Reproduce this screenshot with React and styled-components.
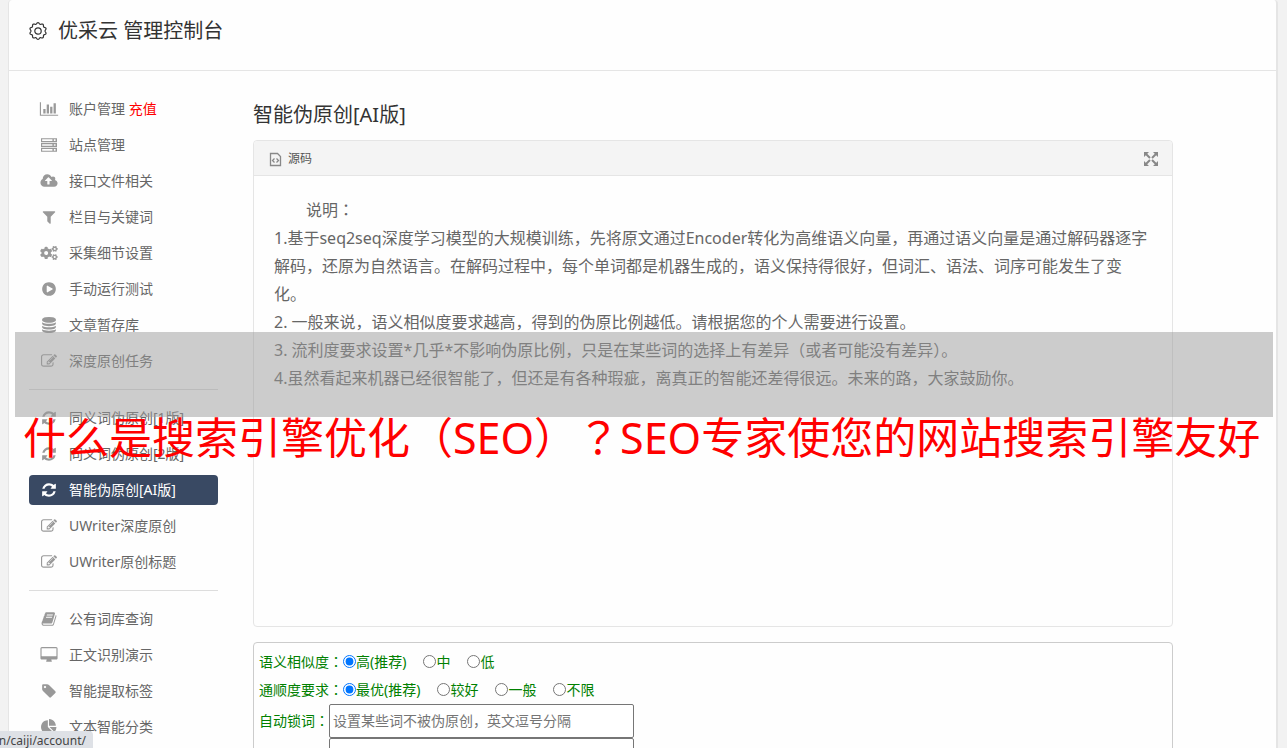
import React, { useState } from 'react';
import styled, { createGlobalStyle } from 'styled-components';
import { FaCogs } from 'react-icons/fa';

const GlobalStyle = createGlobalStyle`
  * {
    box-sizing: border-box;
  }

  body {
    margin: 0;
    overflow: hidden;
    background: #f2f2f2;
    color: #666;
    font-family: 'Noto Sans', 'Noto Sans CJK SC', sans-serif;
    font-size: 14px;
  }
`;

const Page = styled.div`
  position: relative;
  height: 100vh;
  overflow: hidden;
`;

const Shell = styled.div`
  margin: 0 9px 0 8px;
  min-height: 100%;
  background: #fefefe;
  border-left: 1px solid #e5e5e5;
  border-right: 2px solid #e5e5e5;
  border-radius: 4px 4px 0 0;
`;

const Header = styled.header`
  display: flex;
  align-items: center;
  gap: 11px;
  height: 71px;
  padding: 0 20px 8px;
  border-bottom: 1px solid #e5e5e5;
  color: #333;
`;

const Brand = styled.h1`
  margin: 0;
  font-size: 20px;
  line-height: 28px;
  font-weight: 400;
`;

const Columns = styled.div`
  display: flex;
  align-items: flex-start;
  gap: 35px;
  padding: 23px 103px 0 20px;
`;

const Menu = styled.ul`
  flex: 0 0 189px;
  display: flex;
  flex-direction: column;
  gap: 6px;
  margin: 0;
  padding: 0;
  list-style: none;
`;

const MenuLink = styled.a`
  display: flex;
  align-items: center;
  gap: 10px;
  height: 30px;
  padding: 0 10px;
  border-radius: 4px;
  background: ${({ $active }) => ($active ? '#394963' : 'transparent')};
  color: ${({ $active }) => ($active ? '#fff' : '#666')};
  line-height: 30px;
  text-decoration: none;
  white-space: nowrap;

  svg {
    flex: 0 0 20px;
    color: ${({ $active }) => ($active ? '#fff' : '#999')};
  }
`;

const Recharge = styled.span`
  color: #f00;
`;

const Divider = styled.li`
  height: 15px;
  padding-top: 7px;

  &::after {
    content: '';
    display: block;
    border-top: 1px solid #ddd;
  }
`;

const Main = styled.main`
  flex: 1;
  min-width: 0;
`;

const Title = styled.h2`
  margin: 0;
  padding: 7px 0 11px;
  color: #333;
  font-size: 20px;
  line-height: 28px;
  font-weight: 400;
`;

const Editor = styled.section`
  margin-bottom: 15px;
  border: 1px solid #e5e5e5;
  border-radius: 4px;
`;

const Toolbar = styled.div`
  display: flex;
  align-items: center;
  justify-content: space-between;
  height: 35px;
  padding: 2px 13px 0 15px;
  border-bottom: 1px solid #e5e5e5;
  border-radius: 4px 4px 0 0;
  background: #f4f4f4;
`;

const ToolButton = styled.button`
  display: flex;
  align-items: center;
  gap: 6px;
  padding: 0;
  border: 0;
  background: none;
  color: #555;
  font-family: inherit;
  font-size: 12px;
  line-height: 18px;
  cursor: pointer;

  svg {
    color: #888;
  }
`;

const Article = styled.div`
  min-height: 450px;
  padding: 20px;
  font-size: 16px;
  line-height: 28px;

  p {
    margin: 0;
  }

  p:first-child {
    text-indent: 32px;
  }
`;

const Options = styled.form`
  padding: 5px;
  border: 1px solid #ccc;
  border-radius: 4px;
  color: #008000;
`;

const OptionRow = styled.div`
  display: flex;
  align-items: center;
  min-height: 28px;
  line-height: 28px;
`;

const RadioLabel = styled.label`
  display: flex;
  align-items: center;
  margin-right: 17px;
  white-space: nowrap;

  input {
    width: 13px;
    height: 13px;
    margin: 0 0 2px;
  }
`;

const TextInput = styled.input`
  width: 305px;
  height: 34px;
  padding: 0 3px 2px;
  border: 1px solid #767676;
  border-radius: 2px;
  font: inherit;
  line-height: 20px;

  &::placeholder {
    color: #757575;
  }
`;

const WordArea = styled.textarea`
  display: block;
  width: 305px;
  height: 80px;
  margin-left: 70px;
  border: 1px solid #767676;
  border-radius: 2px;
  resize: none;
`;

// full-width marks that sit in the middle of their box
const Mark = styled.span`
  font-family: 'Noto Sans CJK TC', sans-serif;
  line-height: 0;
`;

const Banner = styled.div`
  position: absolute;
  top: 332px;
  left: 15px;
  right: 14px;
  height: 85px;
  background: rgba(153, 153, 153, 0.5);
`;

const BannerText = styled.div`
  padding: 76px 0 0 8px;
  color: #f00;
  font-size: 43px;
  line-height: 60px;
  white-space: nowrap;
`;

const StatusBubble = styled.div`
  position: absolute;
  left: 0;
  bottom: 0;
  display: flex;
  justify-content: flex-end;
  width: 93px;
  height: 17px;
  padding-right: 7px;
  border-radius: 0 4px 0 0;
  background: #dee1e6;
  color: #444;
  font-size: 12px;
  line-height: 20px;
`;

const shapes = {
  chart: {
    width: 2048,
    d: 'M640 896v512h-256v-512h256zm384-512v1024h-256v-1024h256zm1024 1152v128h-2048v-1536h128v1408h1920zm-640-896v768h-256v-768h256zm384-384v1152h-256v-1152h256z',
  },
  server: {
    d: 'M0 128h1792v448h-1792zM128 256v192h1152v-192zM1440 256v192h192v-192zM0 672h1792v448h-1792zM128 800v192h1152v-192zM1440 800v192h192v-192zM0 1216h1792v448h-1792zM128 1344v192h1152v-192zM1440 1344v192h192v-192z',
  },
  upload: {
    x: -64,
    width: 1920,
    d: 'M1216 864q0-14-9-23l-352-352q-9-9-23-9t-23 9l-351 351q-10 12-10 24 0 14 9 23t23 9h224v352q0 13 9.5 22.5t22.5 9.5h192q13 0 22.5-9.5t9.5-22.5v-352h224q13 0 22.5-9.5t9.5-22.5zm640 288q0 159-112.5 271.5t-271.5 112.5h-1088q-185 0-316.5-131.5t-131.5-316.5q0-130 70-240t188-165q-2-30-2-43 0-212 150-362t362-150q156 0 285.5 87t188.5 231q71-62 166-62 106 0 181 75t75 181q0 76-41 138 130 31 213.5 135.5t83.5 238.5z',
  },
  filter: {
    d: 'M1595 295q17 41-14 70l-493 493v742q0 42-39 59-13 5-25 5-27 0-45-19l-256-256q-19-19-19-45v-486l-493-493q-31-29-14-70 17-39 59-39h1280q42 0 59 39z',
  },
  play: {
    d: 'M896 128q209 0 385.5 103t279.5 279.5 103 385.5-103 385.5-279.5 279.5-385.5 103-385.5-103-279.5-279.5-103-385.5 103-385.5 279.5-279.5 385.5-103zm384 823q32-18 32-55t-32-55l-544-320q-31-19-64-1-32 19-32 56v640q0 37 32 56 16 8 32 8 17 0 32-9z',
  },
  database: {
    d: 'M896 768q237 0 443-43t325-127v170q0 69-103 128t-280 93.5-385 34.5-385-34.5-280-93.5-103-128v-170q119 84 325 127t443 43zm0 768q237 0 443-43t325-127v170q0 69-103 128t-280 93.5-385 34.5-385-34.5-280-93.5-103-128v-170q119 84 325 127t443 43zm0-384q237 0 443-43t325-127v170q0 69-103 128t-280 93.5-385 34.5-385-34.5-280-93.5-103-128v-170q119 84 325 127t443 43zm0-1152q208 0 385 34.5t280 93.5 103 128v128q0 69-103 128t-280 93.5-385 34.5-385-34.5-280-93.5-103-128v-128q0-69 103-128t280-93.5 385-34.5z',
  },
  edit: {
    d: 'M888 1184l116-116-152-152-116 116v56h96v96h56zm440-720q-16-16-33 1l-350 350q-17 17-1 33t33-1l350-350q17-17 1-33zm80 594v190q0 119-84.5 203.5t-203.5 84.5h-832q-119 0-203.5-84.5t-84.5-203.5v-832q0-119 84.5-203.5t203.5-84.5h832q63 0 117 25 15 7 18 23 3 17-9 29l-49 49q-14 14-32 8-23-6-45-6h-832q-66 0-113 47t-47 113v832q0 66 47 113t113 47h832q66 0 113-47t47-113v-126q0-13 9-22l64-64q15-15 35-7t20 29zm-96-738l288 288-672 672h-288v-288zm444 132l-92 92-288-288 92-92q28-28 68-28t68 28l152 152q28 28 28 68t-28 68z',
  },
  refresh: {
    d: 'M1639 1056q0 5-1 7-64 268-268 434.5t-478 166.5q-146 0-282.5-55t-243.5-157l-129 129q-19 19-45 19t-45-19-19-45v-448q0-26 19-45t45-19h448q26 0 45 19t19 45-19 45l-137 137q71 66 161 102t187 36q134 0 250-65t186-179q11-17 53-117 8-23 30-23h192q13 0 22.5 9.5t9.5 22.5zm25-800v448q0 26-19 45t-45 19h-448q-26 0-45-19t-19-45 19-45l138-138q-148-137-349-137-134 0-250 65t-186 179q-11 17-53 117-8 23-30 23h-199q-13 0-22.5-9.5t-9.5-22.5v-7q65-268 270-434.5t480-166.5q146 0 284 55.5t245 156.5l130-129q19-19 45-19t45 19 19 45z',
  },
  book: {
    d: 'M1703 478q40 57 18 129l-275 906q-19 64-76.5 107.5t-122.5 43.5h-923q-77 0-148.5-53.5t-99.5-131.5q-24-67-2-127 0-4 3-27t4-37q1-8-3-21.5t-3-19.5q2-11 8-21t16.5-23.5 16.5-23.5q23-38 45-91.5t30-91.5q3-10 .5-30t-.5-28q3-11 17-28t17-23q21-36 42-92t25-90q1-9-2.5-32t.5-28q4-13 22-30.5t22-22.5q19-26 42.5-84.5t27.5-96.5q1-8-3-25.5t-2-26.5q2-8 9-18t18-23 17-21q8-12 16.5-30.5t15-35 16-36 19.5-32 26.5-23.5 36-11.5 47.5 5.5l-1 3q38-9 51-9h761q74 0 114 56t18 130l-274 906q-36 119-71.5 153.5t-128.5 34.5h-869q-27 0-38 15-11 16-1 43 24 70 144 70h923q29 0 56-15.5t35-41.5l300-987q7-22 5-57 38 15 59 43zm-1064 2q-4 13 2 22.5t20 9.5h608q13 0 25.5-9.5t16.5-22.5l21-64q4-13-2-22.5t-20-9.5h-608q-13 0-25.5 9.5t-16.5 22.5zm-83 256q-4 13 2 22.5t20 9.5h608q13 0 25.5-9.5t16.5-22.5l21-64q4-13-2-22.5t-20-9.5h-608q-13 0-25.5 9.5t-16.5 22.5z',
  },
  desktop: {
    x: -64,
    width: 1920,
    d: 'M1728 992v-832q0-13-9.5-22.5t-22.5-9.5h-1600q-13 0-22.5 9.5t-9.5 22.5v832q0 13 9.5 22.5t22.5 9.5h1600q13 0 22.5-9.5t9.5-22.5zm128-832v1088q0 66-47 113t-113 47h-544q0 37 16 77.5t32 71 16 43.5q0 26-19 45t-45 19h-512q-26 0-45-19t-19-45q0-14 16-44t32-70 16-78h-544q-66 0-113-47t-47-113v-1088q0-66 47-113t113-47h1600q66 0 113 47t47 113z',
  },
  tag: {
    d: 'M576 448q0-53-37.5-90.5t-90.5-37.5-90.5 37.5-37.5 90.5 37.5 90.5 90.5 37.5 90.5-37.5 37.5-90.5zm1067 576q0 53-37 90l-491 492q-39 37-91 37-53 0-90-37l-715-716q-38-37-64.5-101t-26.5-117v-416q0-52 38-90t90-38h416q53 0 117 26.5t102 64.5l715 714q37 39 37 91z',
  },
  pie: {
    d: 'M768 890l546 546q-106 108-247.5 168t-298.5 60q-209 0-385.5-103t-279.5-279.5-103-385.5 103-385.5 279.5-279.5 385.5-103v762zm187 6h773q0 157-60 298.5t-168 247.5zm709-128h-768v-768q209 0 385.5 103t279.5 279.5 103 385.5z',
  },
};

const MenuIcon = ({ name }) => {
  if (name === 'cogs') return <FaCogs size={14} />;
  const { x = 0, width = 1792, d } = shapes[name];
  return (
    <svg width="20" height="16" viewBox={`${x} 0 ${width} 1792`} fill="currentColor" fillRule="evenodd" aria-hidden="true">
      <path d={d} />
    </svg>
  );
};

// scalloped wheel with ten lobes
const gearPoints = Array.from({ length: 120 }, (_, i) => {
  const angle = (i / 120) * Math.PI * 2;
  const radius = 7.7 + 0.7 * Math.cos(10 * angle);
  return `${(9 + radius * Math.sin(angle)).toFixed(2)},${(9 - radius * Math.cos(angle)).toFixed(2)}`;
}).join(' ');

const GearIcon = () => (
  <svg width="18" height="18" viewBox="0 0 18 18" fill="none" stroke="currentColor" strokeWidth="1.2" aria-hidden="true">
    <polygon points={gearPoints} />
    <circle cx="9" cy="9" r="3.2" />
  </svg>
);

const CodeFileIcon = () => (
  <svg width="13" height="15" viewBox="0 0 13 15" fill="none" stroke="currentColor" strokeWidth="1.3" aria-hidden="true">
    <path d="M1.5 1.5h7l3 3v9h-10z" />
    <path d="M5.5 6.5l-2 2 2 2M7.5 6.5l2 2-2 2" />
  </svg>
);

const ExpandIcon = () => (
  <svg width="16" height="16" viewBox="0 0 16 16" fill="currentColor" stroke="currentColor" strokeWidth="2" aria-hidden="true">
    <path d="M3 3l4 4M13 3l-4 4M3 13l4-4M13 13l-4-4" />
    <path d="M1 1h5l-5 5zM15 1h-5l5 5zM1 15h5l-5-5zM15 15h-5l5-5z" stroke="none" />
  </svg>
);

const menu = [
  { icon: 'chart', text: '账户管理', recharge: true },
  { icon: 'server', text: '站点管理' },
  { icon: 'upload', text: '接口文件相关' },
  { icon: 'filter', text: '栏目与关键词' },
  { icon: 'cogs', text: '采集细节设置' },
  { icon: 'play', text: '手动运行测试' },
  { icon: 'database', text: '文章暂存库' },
  { icon: 'edit', text: '深度原创任务' },
  null,
  { icon: 'refresh', text: '同义词伪原创[1版]' },
  { icon: 'refresh', text: '同义词伪原创[2版]' },
  { icon: 'refresh', text: '智能伪原创[AI版]', active: true },
  { icon: 'edit', text: 'UWriter深度原创' },
  { icon: 'edit', text: 'UWriter原创标题' },
  null,
  { icon: 'book', text: '公有词库查询' },
  { icon: 'desktop', text: '正文识别演示' },
  { icon: 'tag', text: '智能提取标签' },
  { icon: 'pie', text: '文本智能分类' },
];

const RadioRow = ({ label, name, options }) => {
  const [value, setValue] = useState(options[0]);

  return (
    <OptionRow role="radiogroup" aria-label={label}>
      <span>{label}<Mark>：</Mark></span>
      {options.map((option) => (
        <RadioLabel key={option}>
          <input type="radio" name={name} checked={value === option} onChange={() => setValue(option)} />
          {option}
        </RadioLabel>
      ))}
    </OptionRow>
  );
};

const App = () => {
  const [words, setWords] = useState('');

  return (
    <Page>
      <GlobalStyle />
      <Shell>
        <Header>
          <GearIcon />
          <Brand>优采云 管理控制台</Brand>
        </Header>
        <Columns>
          <Menu>
            {menu.map((item, index) =>
              item ? (
                <li key={item.text}>
                  <MenuLink href="#" $active={item.active}>
                    <MenuIcon name={item.icon} />
                    <span>
                      {item.text}
                      {item.recharge && <Recharge> 充值</Recharge>}
                    </span>
                  </MenuLink>
                </li>
              ) : (
                <Divider key={index} />
              )
            )}
          </Menu>
          <Main>
            <Title>智能伪原创[AI版]</Title>
            <Editor>
              <Toolbar>
                <ToolButton type="button">
                  <CodeFileIcon />
                  源码
                </ToolButton>
                <ToolButton type="button" aria-label="全屏">
                  <ExpandIcon />
                </ToolButton>
              </Toolbar>
              <Article>
                <p>说明<Mark>：</Mark></p>
                <p>1.基于seq2seq深度学习模型的大规模训练，先将原文通过Encoder转化为高维语义向量，再通过语义向量是通过解码器逐字解码，还原为自然语言。在解码过程中，每个单词都是机器生成的，语义保持得很好，但词汇、语法、词序可能发生了变化。</p>
                <p>2. 一般来说，语义相似度要求越高，得到的伪原比例越低。请根据您的个人需要进行设置。</p>
                <p>3. 流利度要求设置*几乎*不影响伪原比例，只是在某些词的选择上有差异（或者可能没有差异）。</p>
                <p>4.虽然看起来机器已经很智能了，但还是有各种瑕疵，离真正的智能还差得很远。未来的路，大家鼓励你。</p>
              </Article>
            </Editor>
            <Options>
              <RadioRow label="语义相似度" name="similarity" options={['高(推荐)', '中', '低']} />
              <RadioRow label="通顺度要求" name="fluency" options={['最优(推荐)', '较好', '一般', '不限']} />
              <OptionRow>
                <label htmlFor="lock-words">自动锁词<Mark>：</Mark></label>
                <TextInput
                  id="lock-words"
                  placeholder="设置某些词不被伪原创，英文逗号分隔"
                  value={words}
                  onChange={(e) => setWords(e.target.value)}
                />
              </OptionRow>
              <WordArea aria-label="锁词列表" />
            </Options>
          </Main>
        </Columns>
      </Shell>
      <Banner>
        <BannerText>
          什么是搜索引擎优化（SEO）<Mark>？</Mark>SEO专家使您的网站搜索引擎友好
        </BannerText>
      </Banner>
      <StatusBubble>n/caiji/account/</StatusBubble>
    </Page>
  );
};

export default App;
